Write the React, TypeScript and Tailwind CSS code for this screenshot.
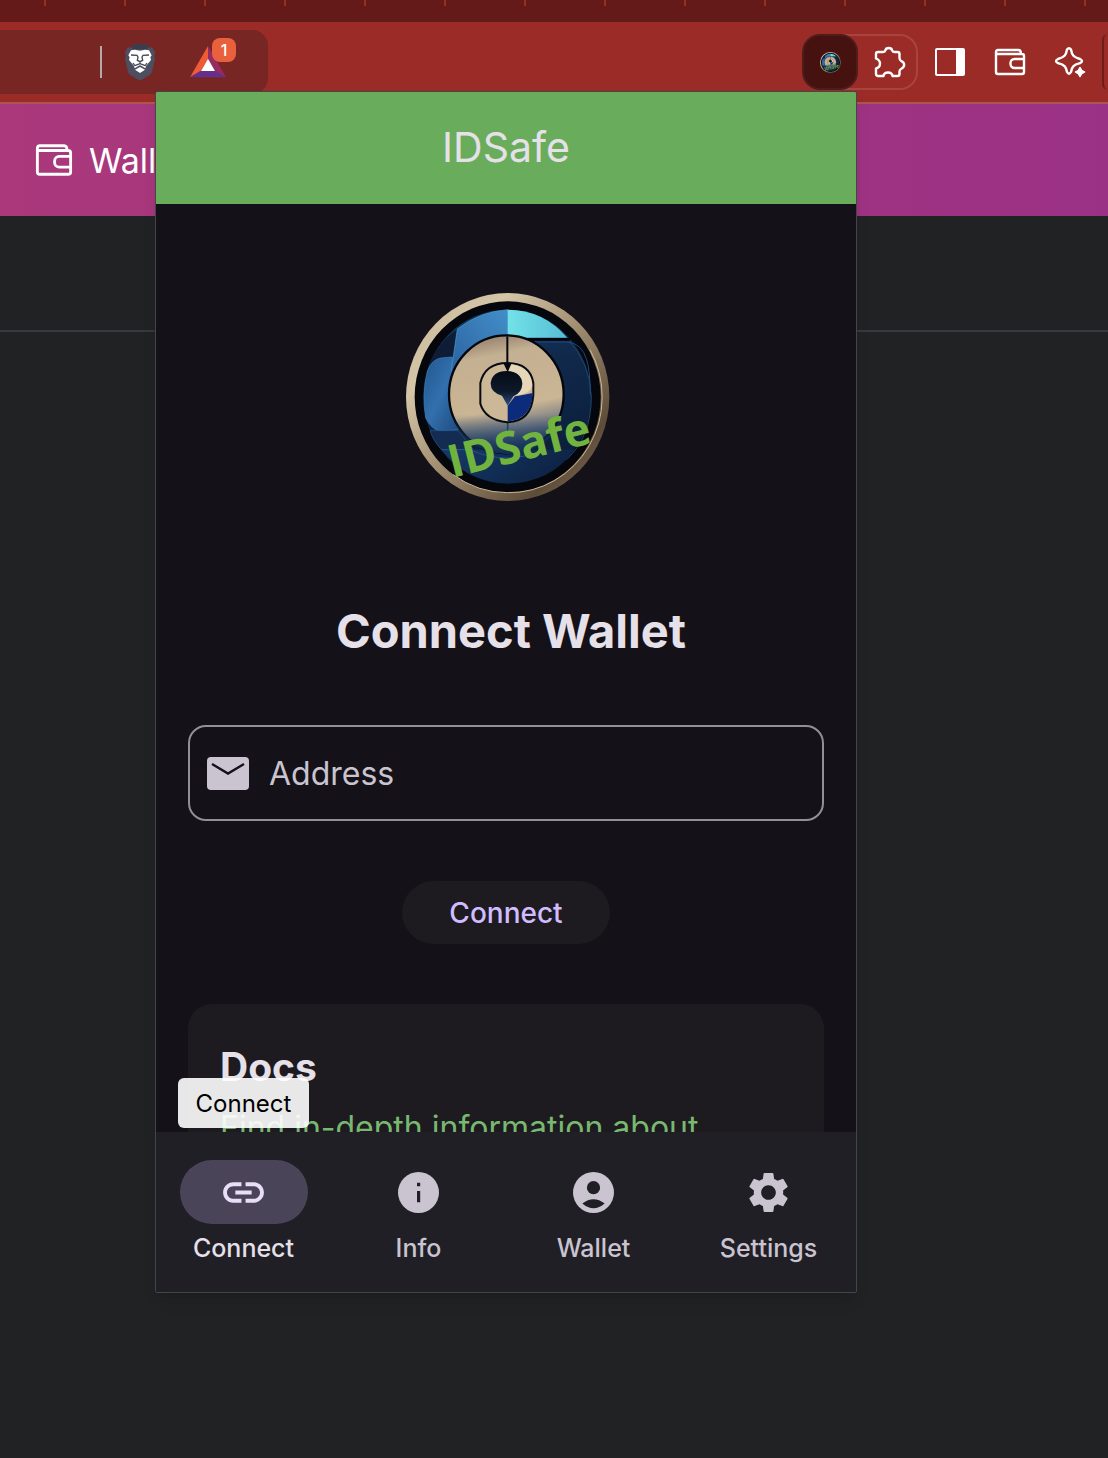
import { useId } from "react";
import { MdLink, MdSettings } from "react-icons/md";

function SafeLogo({ className }: { className: string }) {
  const id = useId().replace(/:/g, "");
  const u = (n: string) => `url(#${id}${n})`;
  return (
    <svg className={className} viewBox="48 40 612 624" preserveAspectRatio="none" role="img" aria-label="IDSafe logo">
      <defs>
        <linearGradient id={id + "ring"} x1="0" y1="0" x2="1" y2="1">
          <stop offset="0" stopColor="#c8b797" />
          <stop offset="0.25" stopColor="#d5c6a8" />
          <stop offset="0.5" stopColor="#a18d70" />
          <stop offset="0.8" stopColor="#5d4c39" />
          <stop offset="1" stopColor="#8b775b" />
        </linearGradient>
        <linearGradient id={id + "navy"} x1="0" y1="0" x2="0.3" y2="1">
          <stop offset="0" stopColor="#153d68" />
          <stop offset="0.5" stopColor="#10284a" />
          <stop offset="1" stopColor="#0b1f3c" />
        </linearGradient>
        <linearGradient id={id + "blue"} x1="0" y1="1" x2="1" y2="0">
          <stop offset="0" stopColor="#2a62a0" />
          <stop offset="1" stopColor="#438fc9" />
        </linearGradient>
        <linearGradient id={id + "side"} x1="0" y1="0" x2="1" y2="1">
          <stop offset="0" stopColor="#22568e" />
          <stop offset="0.5" stopColor="#3270ad" />
          <stop offset="1" stopColor="#1e4a80" />
        </linearGradient>
        <linearGradient id={id + "cyan"} x1="0" y1="0" x2="1" y2="0">
          <stop offset="0" stopColor="#72e2e8" />
          <stop offset="1" stopColor="#57bcd4" />
        </linearGradient>
        <linearGradient id={id + "dial"} x1="0.2" y1="0" x2="0.4" y2="1">
          <stop offset="0" stopColor="#8d7867" />
          <stop offset="0.2" stopColor="#c4b092" />
          <stop offset="0.65" stopColor="#cab594" />
          <stop offset="0.82" stopColor="#7b7f83" />
          <stop offset="1" stopColor="#1d3a62" />
        </linearGradient>
        <linearGradient id={id + "hole"} x1="0" y1="0" x2="0" y2="1">
          <stop offset="0" stopColor="#060b14" />
          <stop offset="0.6" stopColor="#0d1a2c" />
          <stop offset="1" stopColor="#2b4f80" />
        </linearGradient>
        <linearGradient id={id + "fade"} x1="0" y1="0" x2="0" y2="1">
          <stop offset="0" stopColor="#1c4270" stopOpacity="0" />
          <stop offset="1" stopColor="#142f55" />
        </linearGradient>
        <linearGradient id={id + "base"} x1="0" y1="0" x2="1" y2="0.3">
          <stop offset="0" stopColor="#163a68" />
          <stop offset="1" stopColor="#0d2344" />
        </linearGradient>
      </defs>
      <ellipse cx="353" cy="352" rx="305" ry="312" fill={u("ring")} />
      <ellipse cx="353" cy="352" rx="279" ry="287" fill="#05070c" />
      <path d="M600 210A279 287 0 0 1 353 639A279 287 0 0 1 190 585" fill="none" stroke="#c9b997" strokeWidth="3" />
      <ellipse cx="352" cy="351" rx="252" ry="261" fill={u("navy")} />
      <path d="M532 177A252 261 0 0 1 604 351Q604 470 530 540" fill="none" stroke="#1d466f" strokeWidth="3" />
      <path d="M202 148Q125 205 110 285Q150 225 190 235Z" fill="#0e1c36" />
      <path d="M112 275Q125 236 160 234L187 232L184 290Q168 370 205 450L150 454Q125 450 107 415Q95 345 112 275Z" fill={u("side")} stroke="#3c80bd" strokeWidth="2" />
      <path d="M202 148Q270 95 353 90V166Q235 170 189 280L184 272Z" fill={u("blue")} stroke="#4b9bd3" strokeWidth="2" />
      <path d="M353 90Q460 90 532 174H380L353 166Z" fill={u("cyan")} />
      <path d="M385 179H540" stroke="#02050b" strokeWidth="8" />
      <path d="M425 187H532Q575 190 590 240Q600 270 601 345" fill="none" stroke="#1f4a7b" strokeWidth="3" />
      <path d="M120 453H205L250 510H155Q130 485 120 453Z" fill="#142c52" stroke="#24598f" strokeWidth="2" />
      <path d="M155 510H555Q480 610 353 611Q225 605 155 510Z" fill={u("base")} />
      <path d="M155 510H240Q350 560 460 510" fill="none" stroke="#27639b" strokeWidth="2" />
      <ellipse cx="349" cy="344" rx="172" ry="177" fill={u("dial")} stroke="#04070d" strokeWidth="7" />
      <path d="M182 405H516Q485 515 353 524Q218 515 182 405Z" fill={u("fade")} />
      <path d="M352 170V250" stroke="#05070c" strokeWidth="6" />
      <path d="M353 425V495" stroke="#20456f" strokeWidth="5" />
      <path d="M271 310Q285 250 352 250Q420 250 430 310V345Q425 425 352 428Q285 420 271 372Z" fill="#ccb797" stroke="#070b12" strokeWidth="6" />
      <path d="M353 378L375 350Q402 345 428 340Q425 420 353 425Z" fill="#0d2b7b" />
      <path d="M353 254Q422 257 427 318Q421 343 375 348Q398 330 397 312Q392 278 353 272Z" fill="#e6d6ba" />
      <path d="M336 348Q301 338 302 310Q307 274 350 274Q394 276 397 312Q396 339 370 350L353 378Z" fill={u("hole")} />
      <path d="M340 250H365L353 278Z" fill="#05070c" />
      <text x="187" y="595" transform="rotate(-14 187 595)" fontFamily="Open Sans, sans-serif" fontWeight="700" fontSize="136" fill="#71b33f">IDSafe</text>
    </svg>
  );
}

function WalletIcon({ className }: { className: string }) {
  return (
    <svg className={className} viewBox="0 0 32 28" fill="none" stroke="currentColor" strokeWidth="2.4" strokeLinejoin="round" aria-hidden="true">
      <path d="M2 4V24a2 2 0 0 0 2 2H28a2 2 0 0 0 2-2V8a2 2 0 0 0-2-2H3.500Q2 6 2 4Q2 2 4 2H24.500Q27 2 27 6" />
      <path d="M30 11H20.500a4 4 0 0 0-4 4v1a4 4 0 0 0 4 4H30" />
    </svg>
  );
}

function LionIcon() {
  return (
    <svg className="h-9 w-[30px]" viewBox="0 0 90 108" aria-hidden="true">
      <path d="M26 0H64L72 10L82 11L90 24L88 36L90 44L81 84Q79 90 73 94L50 107Q45 109 40 107L17 94Q11 90 9 84L0 44L2 36L0 24L8 11L18 10Z" fill="#4d4e5f" />
      <path d="M26 0H64L72 10L64 16H26L18 10Z" fill="#3b3c4c" />
      <path d="M30 17L45 20L60 17L72 19L80 34L76 40L78 48L63 66L61 73L46 64H44L29 73L27 66L12 48L14 40L10 34L18 19Z" fill="#fff" />
      <path d="M45 69L60 77L45 87L30 77Z" fill="#fff" />
      <path d="M18 33L36 34L39 39L37 49L45 53L53 49L51 39L54 34L72 33M45 52V60M31 64L45 59L59 64M24 57L30 66M66 57L60 66" fill="none" stroke="#454657" strokeWidth="4" />
    </svg>
  );
}

function BatIcon() {
  return (
    <svg className="h-8 w-9" viewBox="0 0 108 96" aria-hidden="true">
      <path d="M54 0V38L32 76L0 94Z" fill="#f05a35" />
      <path d="M54 0V38L76 76L108 94Z" fill="#952b63" />
      <path d="M0 94L32 74H76L108 94Z" fill="#65308c" />
      <path d="M54 38L75 75H33Z" fill="#fff" />
    </svg>
  );
}

function PuzzleIcon() {
  return (
    <svg className="size-8" viewBox="0 0 32 32" fill="none" stroke="#fff" strokeWidth="2.4" strokeLinejoin="round" aria-hidden="true">
      <path d="M2 8a2 2 0 0 1 2-2H9Q11 6 11.300 4.500C12 1.200 17.500 1.200 18.200 4.500Q18.500 6 20.500 6H23.500a2 2 0 0 1 2 2V12Q25.500 14 27 14.800C31.200 16.500 31.200 21 27 23Q25.500 23.800 25.500 25.500V28a2 2 0 0 1-2 2H18.500Q18 26.500 14 26.500Q10 26.500 9.500 30H4a2 2 0 0 1-2-2V22.500Q6 21.500 6 17.500Q6 14 2 12.500Z" />
    </svg>
  );
}

function SparkleIcon() {
  return (
    <svg className="size-8" viewBox="0 0 32 32" aria-hidden="true">
      <path d="M13 3.500Q15 1 17 3.500C18 9 19 11 26 13Q30 15 26 17.200C19 19 18 21 17 26Q15 29.500 13 26C12 21 11 19 4 17.200Q0 15 4 13C11 11 12 9 13 3.500Z" fill="none" stroke="#fff" strokeWidth="2.4" strokeLinejoin="round" />
      <circle cx="26" cy="26" r="6.500" fill="#9a2b26" />
      <path d="M26 21.500Q27 25 30.500 26Q27 27 26 30.500Q25 27 21.500 26Q25 25 26 21.500Z" fill="#fff" stroke="#fff" strokeWidth="1.5" strokeLinejoin="round" />
    </svg>
  );
}

function InfoIcon() {
  return (
    <svg className="size-[41px]" viewBox="0 0 41 41" aria-hidden="true">
      <circle cx="20.500" cy="20.500" r="20.500" fill="currentColor" />
      <path d="M19 10.700h3.200v3.600H19zM19 19h3.200v11.300H19z" fill="#211f26" />
    </svg>
  );
}

function AccountIcon() {
  return (
    <svg className="size-[41px]" viewBox="0 0 41 41" aria-hidden="true">
      <circle cx="20.500" cy="20.500" r="20.500" fill="currentColor" />
      <circle cx="20.500" cy="15.700" r="6.600" fill="#211f26" />
      <path d="M9.300 31.500Q20.500 23 31.700 31.500Q20.500 41 9.300 31.500Z" fill="#211f26" />
    </svg>
  );
}

function MailIcon() {
  return (
    <svg className="h-[33px] w-[42px] shrink-0" viewBox="0 0 42 33" aria-hidden="true">
      <rect width="42" height="33" rx="4" fill="#cac4d0" />
      <path d="M5 7L21 16.500L37 7" fill="none" stroke="#141218" strokeWidth="2.4" />
    </svg>
  );
}

const tabs = [
  { label: "Connect", icon: <MdLink size={49} />, active: true },
  { label: "Info", icon: <InfoIcon />, active: false },
  { label: "Wallet", icon: <AccountIcon />, active: false },
  { label: "Settings", icon: <MdSettings size={49} />, active: false },
];

function TabStrip() {
  return (
    <div className="flex h-[22px] overflow-hidden bg-[#641a18]">
      <span className="h-1.5 w-[46px] shrink-0 border-r-2 border-[#9a2b26]" />
      {Array.from({ length: 24 }, (_, i) => (
        <span key={i} className="h-1.5 w-20 shrink-0 border-r-2 border-[#9a2b26]" />
      ))}
    </div>
  );
}

function Toolbar() {
  return (
    <div className="flex h-[82px] justify-between overflow-hidden border-b-2 border-[#ae5551] bg-[#9a2b26] text-white">
      <div className="mt-2 flex h-16 w-[268px] items-center rounded-r-2xl bg-[#772624] pl-[100px]">
        <span className="h-8 w-0.5 bg-[#b5aaaa]" />
        <button type="button" aria-label="Shields" className="ml-[23px]">
          <LionIcon />
        </button>
        <button type="button" aria-label="Rewards" className="relative ml-[35px]">
          <BatIcon />
          <span className="absolute -top-2 left-[22px] flex size-6 items-center justify-center rounded-lg bg-[#e8603c] font-['Inter',sans-serif] text-base font-medium">1</span>
        </button>
      </div>
      <div className="mt-3 flex h-14 items-center">
        <div className="flex h-14 w-[116px] items-center rounded-[18px] border-2 border-[#a8443f]">
          <button type="button" aria-label="IDSafe extension" className="-ml-0.5 flex size-14 items-center justify-center rounded-[18px] border-2 border-[#4f1c1a] bg-[#451210]">
            <SafeLogo className="size-[21px]" />
          </button>
          <button type="button" aria-label="Extensions" className="ml-4">
            <PuzzleIcon />
          </button>
        </div>
        <button type="button" aria-label="Side panel" className="ml-[17px] h-7 w-[30px] rounded-xs border-2 border-r-[9px] border-white" />
        <button type="button" aria-label="Wallet" className="ml-[29px]">
          <WalletIcon className="h-7 w-8" />
        </button>
        <button type="button" aria-label="Assistant" className="ml-7">
          <SparkleIcon />
        </button>
        <span className="ml-4 h-14 w-1.5 rounded-l-[18px] border-l-2 border-[#6d1e1b]" />
      </div>
    </div>
  );
}

function Popup() {
  return (
    <div className="absolute top-[91px] right-[251px] flex w-[702px] flex-col overflow-hidden rounded-xs border border-[#43474a] bg-[#141218] font-['Inter',sans-serif] text-[#e6e0e9] shadow-lg">
      <header className="flex h-28 items-center justify-center bg-[#69ad5c]">
        <h1 className="text-[41px]">IDSafe</h1>
      </header>
      <main className="flex h-[928px] flex-col items-center overflow-hidden px-8 pt-[89px]">
        <div className="pl-1">
          <SafeLogo className="h-[208px] w-[204px]" />
        </div>
        <h2 className="mt-[100px] pl-2.5 text-[47px] leading-[60px] font-bold">Connect Wallet</h2>
        <label className="mt-16 flex h-24 w-full shrink-0 items-center gap-5 rounded-[18px] border-2 border-[#938f99] pl-[17px]">
          <MailIcon />
          <input type="text" aria-label="Address" placeholder="Address" className="min-w-0 flex-1 bg-transparent pt-0.5 text-[32px] outline-none placeholder:text-[#cac4d0]" />
        </label>
        <button type="button" className="mt-[60px] h-[63px] w-52 shrink-0 rounded-full bg-[#1d1b20] text-[28px] font-medium text-[#d0bcff]">
          Connect
        </button>
        <section className="mt-[60px] w-full shrink-0 rounded-3xl bg-[#1d1b20] px-8 pt-9 pb-12">
          <h3 className="text-[39px] leading-[54px] font-bold">Docs</h3>
          <p className="mt-3 text-[32px] leading-[44px] whitespace-nowrap text-[#79b870]">Find in-depth information about</p>
        </section>
      </main>
      <nav className="relative grid h-40 grid-cols-4 bg-[#211f26] pt-7 text-[#cac4d0]">
        {tabs.map((tab) => (
          <button key={tab.label} type="button" className="flex flex-col items-center gap-2">
            <span className={tab.active ? "flex h-16 w-32 items-center justify-center rounded-full bg-[#4a4458] text-[#e8def8]" : "flex h-16 w-32 items-center justify-center"}>
              {tab.icon}
            </span>
            <span className={tab.active ? "text-[25px] leading-8 font-medium text-[#e6e0e9]" : "text-[25px] leading-8 font-medium"}>{tab.label}</span>
          </button>
        ))}
        <div role="tooltip" className="absolute -top-[54px] left-[22px] flex h-[50px] w-[131px] items-center justify-center rounded-md bg-white/90 pt-0.5 text-2xl text-black">
          Connect
        </div>
      </nav>
    </div>
  );
}

export default function App() {
  return (
    <div className="relative min-h-screen overflow-hidden bg-[#212224] pb-[166px]">
      <TabStrip />
      <Toolbar />
      <div className="flex h-28 items-center bg-linear-to-r from-[#aa387b] to-[#9b3185] pl-[35px] text-white">
        <a href="#wallet" className="flex items-center gap-4 font-['Inter',sans-serif] text-[34px]">
          <WalletIcon className="h-[34px] w-[38px]" />
          Wallet
        </a>
      </div>
      <div className="h-[116px] border-b-2 border-[#37393c]" />
      <div className="h-[960px]" />
      <Popup />
    </div>
  );
}
